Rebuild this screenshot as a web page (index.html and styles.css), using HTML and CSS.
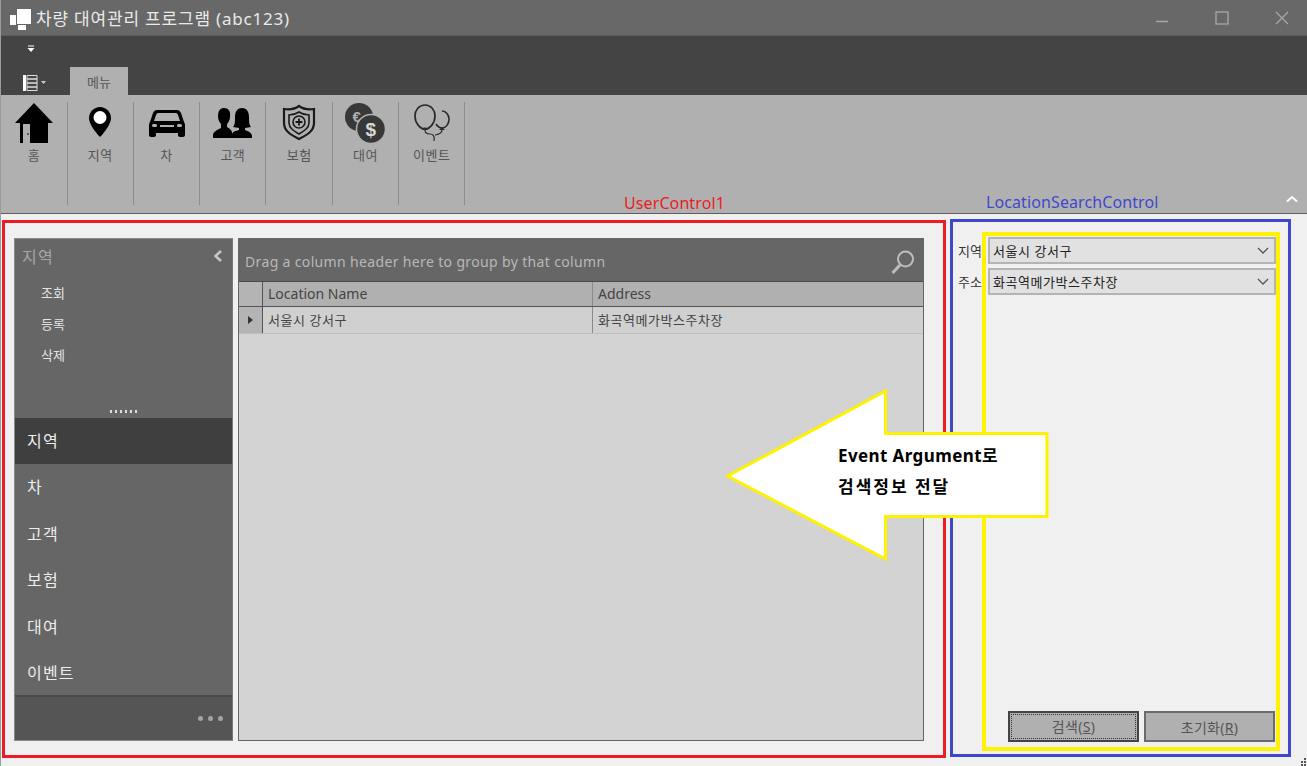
FILE: index.html
```html
<!DOCTYPE html>
<html lang="ko">
<head>
  <meta charset="UTF-8" />
  <title>차량 대여관리 프로그램</title>
  <link rel="stylesheet" href="styles.css">
</head>
<body>
  <div class="app">
    <div class="titlebar">
      <svg class="app-logo" width="22" height="22" viewBox="0 0 22 22">
        <rect x="7" y="0" width="14" height="15" fill="#fff"/>
        <rect x="0" y="6" width="6" height="10" fill="#fff"/>
        <rect x="8" y="16" width="8" height="5" fill="#fff"/>
      </svg>
      <div class="title-text">차량 대여관리 프로그램 (abc123)</div>
      <div class="win-btns">
        <svg width="14" height="14" viewBox="0 0 14 14"><path d="M1 10.500h12" stroke="#a8a8a8" stroke-width="1.400"/></svg>
        <svg width="14" height="14" viewBox="0 0 14 14"><rect x="1" y="1" width="12" height="12" fill="none" stroke="#a8a8a8" stroke-width="1.300"/></svg>
        <svg width="14" height="14" viewBox="0 0 14 14"><path d="M1 1l12 12M13 1L1 13" stroke="#a8a8a8" stroke-width="1.300"/></svg>
      </div>
    </div>

    <div class="tabstrip">
      <div class="qat">
        <svg width="8" height="8" viewBox="0 0 8 8"><path d="M1 0.500h6v1H1zM0.500 3h7L4 7z" fill="#fff"/></svg>
      </div>
      <div class="tabrow">
        <div class="appmenu">
          <svg width="15" height="16" viewBox="0 0 15 16">
            <rect x="0" y="0" width="3" height="16" fill="#fff"/>
            <path d="M4 0.500h10v15H4z" fill="none" stroke="#ddd"/>
            <path d="M4 4h10M4 8h10M4 12h10" stroke="#ddd" stroke-width="1.400"/>
          </svg>
          <svg width="5" height="3" viewBox="0 0 5 3"><path d="M0 0h5L2.500 3z" fill="#ccc"/></svg>
        </div>
        <div class="tab">메뉴</div>
      </div>
    </div>

    <div class="ribbon">
      <div class="rb-item">
        <svg class="rb-icon" width="42" height="42" viewBox="0 0 42 42">
          <path d="M21 1L40 21h-5v20H14V25H10v16H7V21H2z" fill="#000"/>
          <rect x="10" y="22" width="7" height="19" fill="#b0b0b0"/>
          <rect x="7" y="22" width="3" height="19" fill="#000"/>
          <rect x="17" y="22" width="6" height="19" fill="#000"/>
          <circle cx="15" cy="32" r="1" fill="#444"/>
        </svg>
        <span>홈</span>
      </div>
      <div class="rb-item">
        <svg class="rb-icon" width="42" height="42" viewBox="0 0 42 42">
          <path d="M21 5c-6 0-11 5-11 11 0 8 11 19 11 19s11-11 11-19c0-6-5-11-11-11z" fill="#000"/>
          <circle cx="21" cy="15.500" r="6.500" fill="#fff"/>
        </svg>
        <span>지역</span>
      </div>
      <div class="rb-item">
        <svg class="rb-icon" width="42" height="42" viewBox="0 0 42 42">
          <path d="M11 8h20c2 0 3 1 4 3l3 9c1 1 1 3 1 4v9c0 1-1 2-2 2h-3c-1 0-2-1-2-2v-2H10v2c0 1-1 2-2 2H5c-1 0-2-1-2-2v-9c0-1 0-3 1-4l3-9c1-2 2-3 4-3z" fill="#000"/>
          <path d="M12 11h18c1 0 1.500 1 2 2l2 6H8l2-6c.5-1 1-2 2-2z" fill="#b0b0b0"/>
          <rect x="6" y="22" width="5" height="3" rx="1.500" fill="#b0b0b0"/>
          <rect x="31" y="22" width="5" height="3" rx="1.500" fill="#b0b0b0"/>
          <rect x="14" y="23" width="14" height="2" fill="#b0b0b0"/>
        </svg>
        <span>차</span>
      </div>
      <div class="rb-item">
        <svg class="rb-icon" width="42" height="42" viewBox="0 0 42 42">
          <path d="M12 6c4 0 7 3 6 9 0 3-2 6-3 7v3c3 2 5 3 5 6v5H1v-3c0-3 4-5 8-7v-4c-2-2-3-5-3-8 0-5 2-8 6-8z" fill="#000"/>
          <path d="M30 6c5 0 7 4 7 9s0 8 2 10l-6 1v2c3 1 7 3 7 6v2H20v-3c0-3 3-4 7-5v-2l-6-1c2-2 2-5 2-10s2-9 7-9z" fill="#000"/>
        </svg>
        <span>고객</span>
      </div>
      <div class="rb-item">
        <svg class="rb-icon" width="42" height="42" viewBox="0 0 42 42">
          <path d="M21 4c4 3 9 4 15 3v14c0 8-7 12-15 16C13 33 6 29 6 21V7c6 1 11 0 15-3z" fill="none" stroke="#1a1a1a" stroke-width="2.200"/>
          <path d="M21 10c3 2 6 3 10 3v8c0 5-5 8-10 11-5-3-10-6-10-11v-8c4 0 7-1 10-3z" fill="none" stroke="#1a1a1a" stroke-width="1.600"/>
          <circle cx="21" cy="20" r="6" fill="none" stroke="#1a1a1a" stroke-width="1.600"/>
          <path d="M21 16.500v7M17.500 20h7" stroke="#1a1a1a" stroke-width="1.800"/>
        </svg>
        <span>보험</span>
      </div>
      <div class="rb-item">
        <svg class="rb-icon" width="42" height="42" viewBox="0 0 42 42">
          <circle cx="15" cy="15" r="14" fill="#383838"/>
          <text x="13" y="20" class="coin-sign">€</text>
          <circle cx="27" cy="27" r="14.500" fill="#383838" stroke="#b0b0b0" stroke-width="1.500"/>
          <text x="27" y="33.500" text-anchor="middle" class="coin-sign dollar">$</text>
        </svg>
        <span>대여</span>
      </div>
      <div class="rb-item">
        <svg class="rb-icon" width="42" height="42" viewBox="0 0 42 42">
          <path d="M14 3c6 0 10 5 10 11 0 7-5 13-10 13S4 21 4 14C4 8 8 3 14 3z" fill="none" stroke="#2a2a2a" stroke-width="1.700"/>
          <path d="M31 9c4 0 7 4 7 8 0 5-3 9-7 9-2 0-4-1-6-4" fill="none" stroke="#2a2a2a" stroke-width="1.600"/>
          <path d="M11 28h6l-3-3zM28 28h6l-3-3z" fill="#2a2a2a"/>
          <path d="M14 28c0 3 2 4 5 4s5 2 4 7M31 28c0 2-2 4-7 5" fill="none" stroke="#2a2a2a" stroke-width="1.200"/>
        </svg>
        <span>이벤트</span>
      </div>
    </div>

    <div class="content">
      <div class="sidebar">
        <div class="side-top">
          <div class="side-head">
            <span>지역</span>
            <svg width="10" height="12" viewBox="0 0 10 12"><path d="M8 1L2.500 6 8 11" fill="none" stroke="#c8c8c8" stroke-width="2.400"/></svg>
          </div>
          <ul class="side-sub">
            <li>조회</li>
            <li>등록</li>
            <li>삭제</li>
          </ul>
          <div class="side-grip">
            <i></i><i></i><i></i><i></i><i></i><i></i>
          </div>
        </div>
        <ul class="side-nav">
          <li class="active">지역</li>
          <li>차</li>
          <li>고객</li>
          <li>보험</li>
          <li>대여</li>
          <li>이벤트</li>
        </ul>
        <div class="side-foot">
          <i></i><i></i><i></i>
        </div>
      </div>

      <div class="grid">
        <div class="group-panel">
          <span>Drag a column header here to group by that column</span>
          <svg width="26" height="26" viewBox="0 0 26 26">
            <circle cx="15.500" cy="10" r="7.500" fill="none" stroke="#bdbdbd" stroke-width="2"/>
            <path d="M10 16L2.500 24" stroke="#bdbdbd" stroke-width="3"/>
          </svg>
        </div>
        <div class="grid-head">
          <div class="cell-ind"></div>
          <div class="cell-name">Location Name</div>
          <div class="cell-addr">Address</div>
        </div>
        <div class="grid-row">
          <div class="cell-ind"><b class="row-arrow"></b></div>
          <div class="cell-name">서울시 강서구</div>
          <div class="cell-addr">화곡역메가박스주차장</div>
        </div>
      </div>

      <div class="search">
        <div class="search-row">
          <label>지역</label>
          <div class="combo">
            <span>서울시 강서구</span>
            <svg width="12" height="7" viewBox="0 0 12 7"><path d="M1 1l5 5 5-5" fill="none" stroke="#555" stroke-width="1.300"/></svg>
          </div>
        </div>
        <div class="search-row">
          <label>주소</label>
          <div class="combo">
            <span>화곡역메가박스주차장</span>
            <svg width="12" height="7" viewBox="0 0 12 7"><path d="M1 1l5 5 5-5" fill="none" stroke="#555" stroke-width="1.300"/></svg>
          </div>
        </div>
        <div class="search-btns">
          <button class="btn btn-focus"><span>검색(<u>S</u>)</span></button>
          <button class="btn"><span>초기화(<u>R</u>)</span></button>
        </div>
      </div>
    </div>
  </div>

  <!-- annotations drawn over the screenshot -->
  <div class="note-label note-red">UserControl1</div>
  <div class="note-label note-blue">LocationSearchControl</div>
  <div class="box box-red"></div>
  <div class="box box-blue"></div>
  <div class="box box-yellow"></div>
  <svg class="arrow" width="330" height="176" viewBox="0 0 330 176">
    <path d="M3.500 88L161.500 3V45.500H323V128.500H161.500V171z" fill="#fff" stroke="#fff200" stroke-width="3"/>
  </svg>
  <div class="arrow-text">Event Argument로<br><span class="arrow-ko">검색정보 전달</span></div>
  <svg class="ribbon-up" width="12" height="8" viewBox="0 0 12 8"><path d="M1 6.500L6 2l5 4.500" fill="none" stroke="#fff" stroke-width="2"/></svg>
  <svg class="resize-grip" width="8" height="8" viewBox="0 0 8 8"><path d="M5 0h2v2H5zM2 3h2v2H2zM5 3h2v2H5zM2 6h2v2H2zM5 6h2v2H5z" fill="#555"/></svg>
</body>
</html>
```

FILE: styles.css
```css
* {
  box-sizing: border-box;
}
html, body {
  margin: 0;
  padding: 0;
}
body {
  position: relative;
  width: 1307px;
  height: 766px;
  overflow: hidden;
  font-family: "Noto Sans", "Noto Sans CJK KR", sans-serif;
  background: #f0f0f0;
}
.app {
  width: 1307px;
  height: 766px;
  display: flex;
  flex-direction: column;
  border-left: 1px solid #9c9c9c;
}
ul {
  list-style: none;
  margin: 0;
  padding: 0;
}

/* title bar */
.titlebar {
  height: 36px;
  background: #686868;
  display: flex;
  align-items: center;
  padding-left: 9px;
  border-bottom: 1px solid #5c5c5c;
}
.app-logo {
  margin-top: 4px;
}
.title-text {
  margin-left: 4px;
  font-size: 17px;
  color: #eaeaea;
  letter-spacing: 0.8px;
}
.win-btns {
  margin-left: auto;
  margin-right: 18px;
  display: flex;
  gap: 46px;
}

/* ribbon tabs */
.tabstrip {
  height: 59px;
  background: #444;
  display: flex;
  flex-direction: column;
}
.qat {
  height: 31px;
  padding: 9px 0 0 26px;
}
.qat svg {
  display: block;
}
.tabrow {
  height: 28px;
  display: flex;
}
.appmenu {
  width: 69px;
  padding: 7px 0 0 22px;
  display: flex;
  gap: 3px;
  align-items: center;
  height: 24px;
}
.tab {
  width: 58px;
  height: 28px;
  background: #b0b0b0;
  color: #555;
  font-size: 13px;
  text-align: center;
  line-height: 30px;
}
.ribbon {
  height: 119px;
  background: #b0b0b0;
  border-bottom: 1px solid #5e5e5e;
  padding: 7px 0 0 0.3px;
  display: flex;
  align-items: flex-start;
}
.rb-item {
  width: 66.300px;
  height: 103px;
  border-right: 1px solid #8c8c8c;
  display: flex;
  flex-direction: column;
  align-items: center;
  font-size: 13px;
  letter-spacing: 0.5px;
  color: #555;
}
.rb-item span {
  margin-top: 2px;
  line-height: 18px;
}
.rb-icon {
  display: block;
}
.coin-sign {
  font-family: "Liberation Sans", sans-serif;
  font-weight: bold;
  font-size: 15px;
  fill: #b0b0b0;
  text-anchor: middle;
}
.dollar {
  font-size: 19px;
  fill: #d8d8d8;
}

/* body */
.content {
  flex: 1;
  display: flex;
  padding: 24px 0 25px 13px;
}
.sidebar {
  width: 219px;
  display: flex;
  flex-direction: column;
  background: #666;
  border: 1px solid #8a8a8a;
  border-right-color: #777;
  color: #eee;
}
.side-top {
  height: 179px;
  display: flex;
  flex-direction: column;
}
.side-head {
  height: 33px;
  display: flex;
  justify-content: space-between;
  align-items: center;
  padding: 0 9px 0 7px;
  font-size: 16px;
  letter-spacing: 1.200px;
  color: #a6a6a6;
}
.side-sub {
  padding: 6px 0 0 26px;
  font-size: 13px;
  color: #e4e4e4;
}
.side-sub li {
  height: 31px;
  line-height: 31px;
}
.side-grip {
  margin-top: auto;
  height: 10px;
  display: flex;
  justify-content: center;
  gap: 2.500px;
  padding-top: 2px;
}
.side-grip i {
  width: 2.500px;
  height: 2.500px;
  background: #ddd;
}
.side-nav li {
  height: 46.400px;
  line-height: 46.500px;
  padding-left: 12px;
  font-size: 16px;
  letter-spacing: 1.200px;
  color: #eee;
}
.side-nav .active {
  background: #3f3f3f;
}
.side-foot {
  flex: 1;
  margin-top: -1px;
  background: #555;
  border-top: 2px solid #4a4a4a;
  display: flex;
  justify-content: flex-end;
  align-items: center;
  gap: 5px;
  padding-right: 9px;
}
.side-foot i {
  width: 5px;
  height: 5px;
  border-radius: 50%;
  background: #a4a4a4;
}

/* grid */
.grid {
  width: 686px;
  margin-left: 5px;
  background: #d3d3d3;
  border: 1px solid #666;
  font-size: 14px;
}
.group-panel {
  height: 42px;
  background: #666;
  color: #b8b8b8;
  display: flex;
  align-items: center;
  justify-content: space-between;
  padding: 2px 7px 0 6px;
  letter-spacing: 0.35px;
}
.group-panel svg {
  margin-top: 1px;
}
.grid-head, .grid-row {
  display: flex;
}
.grid-head {
  height: 26px;
  background: #b0b0b0;
  color: #444;
  border-top: 1px solid #4a4a4a;
  border-bottom: 1px solid #555;
  line-height: 24px;
}
.grid-row {
  height: 27px;
  background: #d0d0d0;
  color: #444;
  font-size: 13px;
  letter-spacing: 0.55px;
  line-height: 26px;
  border-bottom: 1px solid #bdbdbd;
}
.cell-ind {
  width: 24px;
  background: #b4b4b4;
  border-right: 1px solid #555;
  display: flex;
  align-items: center;
  justify-content: center;
}
.cell-name {
  width: 330px;
  padding-left: 5px;
  border-right: 1px solid #8a8a8a;
}
.cell-addr {
  flex: 1;
  padding-left: 5px;
}
.row-arrow {
  width: 0;
  height: 0;
  border-left: 5px solid #333;
  border-top: 4px solid transparent;
  border-bottom: 4px solid transparent;
  margin-top: -1px;
}

/* search panel */
.search {
  width: 318px;
  margin-left: 34px;
  display: flex;
  flex-direction: column;
  margin-top: -1px;
  gap: 4px;
}
.search-row {
  display: flex;
  align-items: center;
}
.search-row label {
  width: 30px;
  font-size: 13px;
  color: #333;
}
.combo {
  width: 288px;
  height: 27px;
  background: #e1e1e1;
  border: 2px solid #b4b4b4;
  display: flex;
  align-items: center;
  justify-content: space-between;
  padding: 0 5px 0 3px;
  font-size: 13px;
  letter-spacing: 0.55px;
  color: #222;
}
.search-btns {
  margin-top: auto;
  display: flex;
  gap: 5px;
  padding-left: 50px;
  margin-bottom: -1px;
}
.btn {
  width: 131px;
  height: 31px;
  padding: 0;
  font-family: inherit;
  font-size: 14px;
  letter-spacing: 0.3px;
  color: #555;
  background: #b0b0b0;
  border: 2px solid #6a6a6a;
}
.btn-focus {
  border-color: #444;
}
.btn-focus span {
  display: block;
  margin: 1px;
  line-height: 23px;
  border: 1px dotted #333;
}

/* annotations */
.box {
  position: absolute;
  border-style: solid;
  pointer-events: none;
}
.box-red {
  left: 2px;
  top: 220px;
  width: 944px;
  height: 538px;
  border-width: 3px;
  border-color: #ed1c24;
}
.box-blue {
  left: 950px;
  top: 219px;
  width: 341px;
  height: 538px;
  border-width: 3px;
  border-color: #3f48cc;
}
.box-yellow {
  left: 982px;
  top: 232px;
  width: 298px;
  height: 519px;
  border-width: 4px;
  border-color: #fff200;
}
.note-label {
  position: absolute;
  top: 192px;
  font-size: 16px;
  letter-spacing: 0.1px;
  line-height: 21px;
}
.note-red {
  left: 624px;
  top: 193px;
  color: #ed1c24;
}
.note-blue {
  left: 986px;
  color: #3f48cc;
}
.arrow {
  position: absolute;
  left: 724px;
  top: 388px;
}
.arrow-text {
  position: absolute;
  left: 838px;
  top: 440px;
  font-size: 17px;
  font-weight: bold;
  letter-spacing: 0.4px;
  line-height: 31px;
  color: #000;
}
.arrow-ko {
  letter-spacing: 2px;
}
.ribbon-up {
  position: absolute;
  left: 1286px;
  top: 195px;
}
.resize-grip {
  position: absolute;
  left: 1299px;
  top: 758px;
}
```
